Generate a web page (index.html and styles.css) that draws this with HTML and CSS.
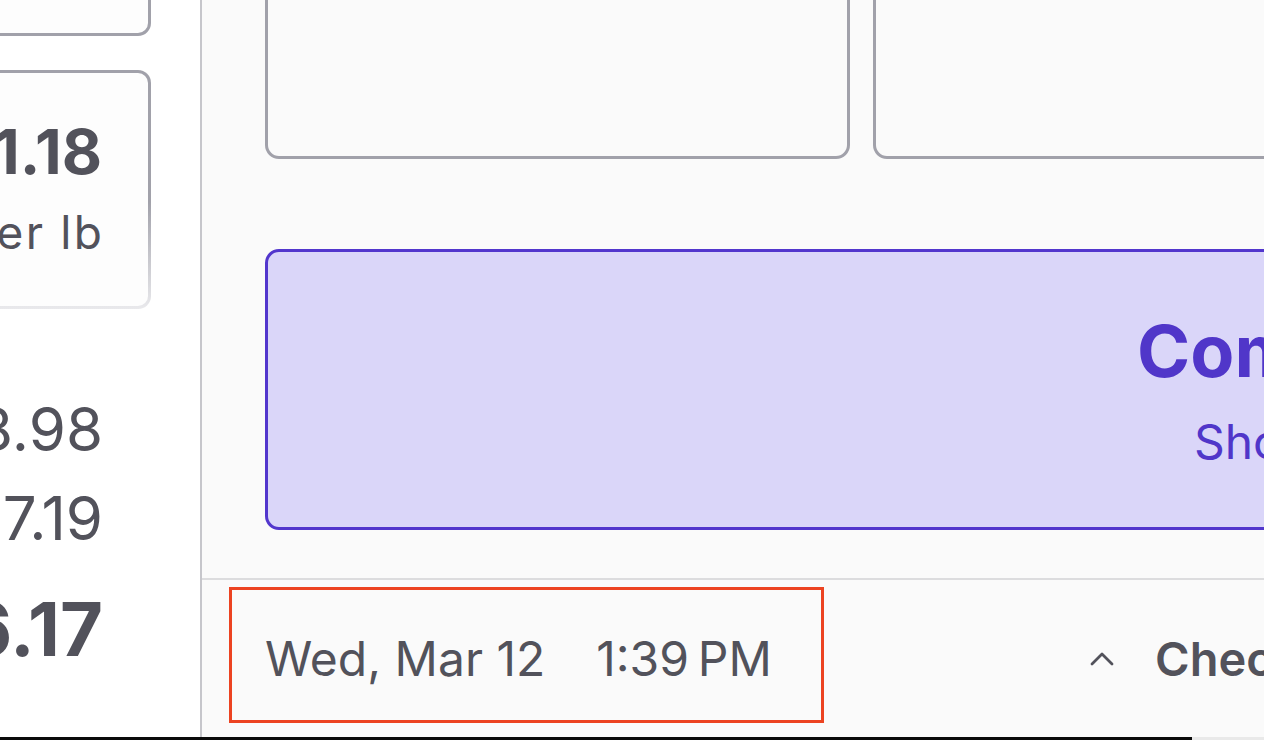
FILE: index.html
```html
<!DOCTYPE html>
<html lang="en">
<head>
<meta charset="utf-8">
<title>Register</title>
<link rel="stylesheet" href="styles.css">
</head>
<body>
<div class="screen">
  <div class="app">
    <aside class="sidebar">
      <div class="item-card"></div>
      <div class="item-card item-card--selected">
        <div class="price">$1.18</div>
        <div class="unit">per lb</div>
      </div>
      <div class="totals">
        <div class="total-row">$28.98</div>
        <div class="total-row total-row--tax">$7.19</div>
        <div class="total-row total-row--grand">$36.17</div>
      </div>
    </aside>
    <main class="main">
      <section class="workspace">
        <div class="tiles">
          <div class="tile"></div>
          <div class="tile"></div>
        </div>
        <button class="action" type="button">
          <span class="action-title">Complete Sale</span>
          <span class="action-sub">Show sale details</span>
        </button>
      </section>
      <footer class="statusbar">
        <div class="datetime">
          <span class="date">Wed, Mar 12</span>
          <span class="time">1:39&#8201;PM</span>
        </div>
        <div class="checkout">
          <svg class="chevron" width="24" height="14" viewBox="0 0 24 14" aria-hidden="true">
            <polyline points="2,12 12,2 22,12" fill="none" stroke="#52525b" stroke-width="2.8" stroke-linecap="round" stroke-linejoin="round"/>
          </svg>
          <span class="checkout-label">Checkout</span>
        </div>
      </footer>
    </main>
  </div>
  <div class="edge">
    <div class="edge-dark"></div>
    <div class="edge-light"></div>
  </div>
</div>
</body>
</html>
```
FILE: styles.css
```css
* { box-sizing: border-box; }

html, body {
  margin: 0;
  padding: 0;
  background: #fafafa;
  overflow: hidden;
}

body {
  font-family: Inter, "Noto Sans", sans-serif;
  color: #52525b;
  width: 1264px;
  height: 740px;
}

.screen {
  display: flex;
  flex-direction: column;
  height: 740px;
  overflow: hidden;
}

.app {
  display: grid;
  grid-template-columns: 362px 2600px;
  height: 737px;
  margin-left: -160px;
}

/* ---------- sidebar ---------- */
.sidebar {
  background: #ffffff;
  border-right: 2px solid #c6c6cb;
  display: flex;
  flex-direction: column;
  overflow: hidden;
}

.item-card {
  height: 100px;
  margin: -64px 49px 0 24px;
  border: 3px solid #a1a1aa;
  border-radius: 13px;
  background: #fdfdfd;
  flex-shrink: 0;
}

.item-card--selected {
  height: 239px;
  margin-top: 34px;
  padding: 42px 46px 0 0;
  border-color: transparent;
  background:
    linear-gradient(#fdfdfd, #fdfdfd) padding-box,
    linear-gradient(180deg, #a1a1aa 0%, #a1a1aa 55%, #e9e9ec 100%) border-box;
  display: flex;
  flex-direction: column;
  align-items: flex-end;
}

.price {
  font-size: 62px;
  font-weight: 700;
  line-height: 74px;
  white-space: nowrap;
}

.unit {
  font-size: 46px;
  line-height: 55px;
  margin-top: 16px;
  margin-right: -2px;
  letter-spacing: 2.2px;
  white-space: nowrap;
}

.totals {
  display: flex;
  flex-direction: column;
  padding-right: 97px;
  margin-top: 84px;
}

.total-row {
  display: flex;
  justify-content: flex-end;
  font-size: 60px;
  line-height: 72px;
  white-space: nowrap;
}

.total-row--tax {
  margin-top: 17px;
}

.total-row--grand {
  margin-top: 31px;
  font-size: 74px;
  font-weight: 700;
  line-height: 88px;
}

/* ---------- main ---------- */
.main {
  display: flex;
  flex-direction: column;
  background: #fafafa;
  overflow: hidden;
}

.workspace {
  height: 578px;
  padding-left: 63px;
  display: flex;
  flex-direction: column;
  align-items: flex-start;
}

.tiles {
  display: flex;
  gap: 23px;
  margin-top: -101px;
  height: 260px;
  flex-shrink: 0;
}

.tile {
  width: 585px;
  height: 260px;
  border: 3px solid #a1a1aa;
  border-radius: 14px;
  background: #fafafa;
}

.action {
  margin-top: 90px;
  width: 2252px;
  height: 281px;
  flex-shrink: 0;
  border: 3px solid #5236cd;
  border-radius: 14px;
  background: #dad6f9;
  color: #5036c9;
  font-family: inherit;
  display: flex;
  flex-direction: column;
  align-items: center;
  justify-content: center;
  padding: 0;
}

.action-title {
  font-size: 72px;
  font-weight: 700;
  line-height: 86px;
  white-space: nowrap;
}

.action-sub {
  font-size: 48px;
  line-height: 58px;
  margin-top: 19px;
  white-space: nowrap;
}

.statusbar {
  height: 159px;
  border-top: 2px solid #dcdcde;
  padding: 7px 0 0 27px;
  display: flex;
  align-items: flex-start;
}

.datetime {
  width: 595px;
  height: 136px;
  border: 3px solid #ec4321;
  padding: 7px 0 0 33px;
  display: flex;
  align-items: center;
  gap: 51px;
  font-size: 48px;
  line-height: 58px;
  white-space: nowrap;
  flex-shrink: 0;
}

.checkout {
  height: 136px;
  margin-left: 266px;
  padding-top: 7px;
  display: flex;
  align-items: center;
  gap: 41px;
  flex-shrink: 0;
}

.chevron {
  display: block;
}

.checkout-label {
  font-size: 47px;
  font-weight: 600;
  line-height: 56px;
  white-space: nowrap;
}

/* ---------- bottom edge ---------- */
.edge {
  display: flex;
  height: 3px;
}

.edge-dark {
  flex: 1;
  background: #0a0a0a;
}

.edge-light {
  width: 72px;
  background: #e9e9e9;
}
```
